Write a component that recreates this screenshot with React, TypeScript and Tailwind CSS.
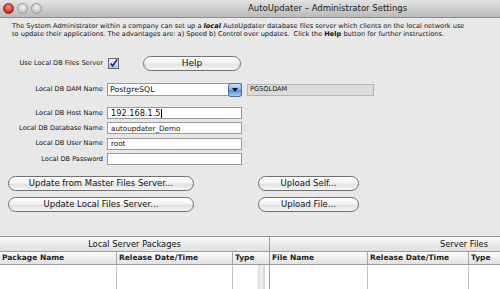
import React from "react";

const fieldLabels = [
  { label: "Local DB Host Name", value: "192.168.1.5", big: true },
  { label: "Local DB Database Name", value: "autoupdater_Demo" },
  { label: "Local DB User Name", value: "root" },
  { label: "Local DB Password", value: "" },
];

function AquaButton({ label, className = "" }: { label: string; className?: string }) {
  return (
    <div
      className={`flex h-[15px] items-center justify-center rounded-full border border-[#707070] bg-[linear-gradient(#ffffff,#f3f3f3_45%,#e2e2e2_55%,#f4f4f4)] text-[8.5px] leading-none text-[#111] ${className}`}
    >
      {label}
    </div>
  );
}

function Light({ color }: { color: "red" | "gray" }) {
  return (
    <div
      className={`h-[11px] w-[11px] rounded-full border ${
        color === "red"
          ? "border-[#9c1a14] bg-[radial-gradient(circle_at_50%_35%,#ff9a8c,#e0392c_55%,#b3160e)]"
          : "border-[#9a9a9a] bg-[radial-gradient(circle_at_50%_35%,#f0f0f0,#cfcfcf_55%,#b2b2b2)]"
      }`}
    />
  );
}

function ColHeaders({ cols }: { cols: { name: string; w: string }[] }) {
  return (
    <div className="flex h-[13px] border-b border-[#9c9c9c] bg-[linear-gradient(#ffffff,#eeeeee_50%,#e2e2e2)] text-[7.5px] font-semibold leading-[12px] text-[#222]">
      {cols.map((c, i) => (
        <div key={i} className={`${c.w} truncate border-r border-[#a8a8a8] pl-[2px]`}>
          {c.name}
        </div>
      ))}
    </div>
  );
}

export default function App() {
  return (
    <div className="flex h-[289px] w-[500px] flex-col overflow-hidden bg-[#e8e8e8] font-['DejaVu_Sans',sans-serif] text-[#111]">
      {/* title bar */}
      <div className="relative flex h-[18px] shrink-0 items-center border-b border-[#8c8c8c] bg-[linear-gradient(#e4e4e4,#cfcfcf_50%,#b9b9b9)]">
        <div className="flex gap-[3px] pl-[3px]">
          <Light color="red" />
          <Light color="gray" />
          <Light color="gray" />
        </div>
        <div className="absolute left-[248px] text-[8.5px] leading-none text-[#1c1c1c]">
          AutoUpdater – Administrator Settings
        </div>
      </div>

      {/* description */}
      <div className="px-[12px] pt-[4px] text-[6.6px] leading-[8px] text-[#111]">
        <p>
          The System Administrator within a company can set up a <b><i>local</i></b> AutoUpdater database files
          server which clients on the local network use
        </p>
        <p>
          to update their applications. The advantages are: a) Speed b) Control over updates.&nbsp; Click the{" "}
          <b>Help</b> button for further instructions.
        </p>
      </div>

      {/* use local db row */}
      <div className="mt-[17px] flex h-[16px] items-center">
        <div className="w-[103px] text-right text-[6.6px] leading-none">Use Local DB Files Server</div>
        <div className="ml-[5px] flex h-[11px] w-[11px] items-center justify-center border border-[#6a6a6a] bg-[linear-gradient(#eef5ff,#a9c9ef)]">
          <svg width="11" height="11" viewBox="0 0 11 11">
            <path d="M2 5.5 L4.5 8.5 L10 0.5" fill="none" stroke="#1b2a6b" strokeWidth="2" />
          </svg>
        </div>
        <AquaButton label="Help" className="ml-[24px] w-[98px] text-[9px]" />
      </div>

      {/* DAM row */}
      <div className="mt-[12px] flex h-[13px] items-center">
        <div className="w-[103px] text-right text-[6.6px] leading-none">Local DB DAM Name</div>
        <div className="ml-[4px] flex h-[13px] w-[135px] items-center border border-[#9a9a9a] bg-white">
          <span className="flex-1 pl-[2px] text-[7.8px] leading-none">PostgreSQL</span>
          <div className="mr-[-1px] flex h-[14px] w-[14px] items-center justify-center rounded-[3px] border border-[#4a6d9c] bg-[linear-gradient(#cde3fb,#79aee8_50%,#4f8fdc_55%,#a8d0f6)]">
            <svg width="6" height="4" viewBox="0 0 6 4">
              <path d="M0 0 L6 0 L3 4 Z" fill="#111" />
            </svg>
          </div>
        </div>
        <div className="ml-[5px] flex h-[12px] w-[127px] items-center border border-[#b4b4b4] bg-[#dcdcdc] pl-[2px] text-[6.6px] leading-none">
          PGSQLDAM
        </div>
      </div>

      {/* text fields */}
      <div className="mt-[11px] flex flex-col gap-[3.4px]">
        {fieldLabels.map((f) => (
          <div key={f.label} className="flex h-[12px] items-center">
            <div className="w-[103px] text-right text-[6.6px] leading-none">{f.label}</div>
            <div
              className={`ml-[4px] flex h-[12px] w-[135px] items-center border border-[#9a9a9a] bg-white pl-[3px] leading-none ${
                f.big ? "text-[8.2px]" : "text-[7.2px]"
              }`}
            >
              {f.value}
              {f.big && <span className="ml-[1px] h-[9px] w-px bg-black" />}
            </div>
          </div>
        ))}
      </div>

      {/* action buttons */}
      <div className="mt-[11px] flex flex-col gap-[6px] pl-[8px]">
        <div className="flex">
          <AquaButton label="Update from Master Files Server..." className="w-[186px]" />
          <AquaButton label="Upload Self..." className="ml-[64px] w-[101px]" />
        </div>
        <div className="flex">
          <AquaButton label="Update Local Files Server..." className="w-[186px]" />
          <AquaButton label="Upload File..." className="ml-[64px] w-[101px]" />
        </div>
      </div>

      {/* tables */}
      <div className="mt-[24px] flex flex-1 border-t border-[#909090] bg-white">
        <div className="flex w-[270px] flex-col border-r border-[#9c9c9c]">
          <div className="flex h-[15px] items-center justify-center border-b border-[#9c9c9c] bg-[linear-gradient(#fbfbfb,#ececec_50%,#e0e0e0)] text-[8.3px] leading-none">
            Local Server Packages
          </div>
          <ColHeaders
            cols={[
              { name: "Package Name", w: "w-[117px]" },
              { name: "Release Date/Time", w: "w-[116px]" },
              { name: "Type", w: "flex-1 border-r-0" },
            ]}
          />
          <div className="flex flex-1">
            <div className="w-[117px] border-r border-[#c4c4c4]" />
            <div className="w-[116px] border-r border-[#c4c4c4]" />
            <div className="flex flex-1 pl-[25px]">
              <div className="w-[7px] bg-[linear-gradient(90deg,#d8d8d8,#f4f4f4_50%,#cfcfcf)]" />
            </div>
          </div>
        </div>
        <div className="flex flex-1 flex-col">
          <div className="flex h-[15px] items-center justify-end border-b border-[#9c9c9c] bg-[linear-gradient(#fbfbfb,#ececec_50%,#e0e0e0)] pr-[12px] text-[8.3px] leading-none">
            Server Files
          </div>
          <ColHeaders
            cols={[
              { name: "File Name", w: "w-[98px]" },
              { name: "Release Date/Time", w: "w-[101px]" },
              { name: "Type", w: "flex-1 border-r-0" },
            ]}
          />
          <div className="flex flex-1">
            <div className="w-[98px] border-r border-[#c4c4c4]" />
            <div className="w-[101px] border-r border-[#c4c4c4]" />
            <div className="flex-1" />
          </div>
        </div>
      </div>
    </div>
  );
}
